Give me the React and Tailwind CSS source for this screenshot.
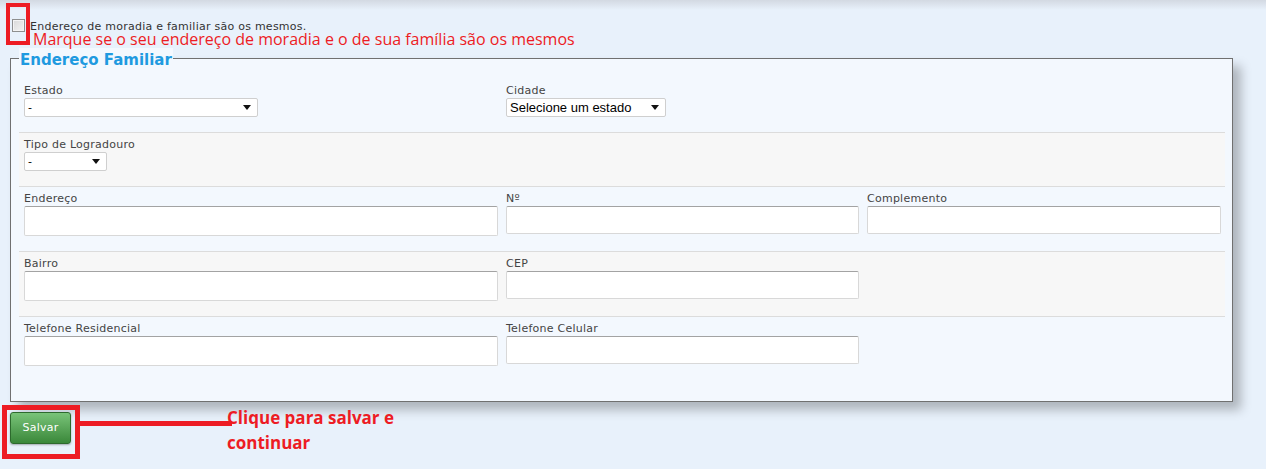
import React from 'react'

const label = "block text-[11px] leading-[13px] mb-[1px] tracking-[0.25px] text-[#444] font-['DejaVu_Sans',sans-serif]"
const input = "block w-full bg-white rounded-[2px] border border-[#d8d8d8] border-t-[#a3a3a3]"

const Arrow = () => (
  <svg width="8" height="5" viewBox="0 0 8 5" className="shrink-0">
    <path d="M0 0h8L4 5z" fill="#111" />
  </svg>
)

const Select = ({ width, text, arial }) => (
  <div className={`${width} h-[19px] bg-white border border-[#cfcfcf] rounded-[2px] flex items-center justify-between pl-[3px] pr-[6px]`}>
    <span className={arial ? "text-[13px] leading-[15px] text-black font-['Liberation_Sans',sans-serif]" : "text-[11px] leading-[13px] text-black font-['DejaVu_Sans',sans-serif]"}>{text}</span>
    <Arrow />
  </div>
)

const Field = ({ name, tall }) => (
  <div>
    <span className={label}>{name}</span>
    <div className={`${input} ${tall ? 'h-[30px]' : 'h-[28px]'}`} />
  </div>
)

const rowBase = "grid grid-cols-[474px_353px_354px] gap-x-[8px] pl-[5px] pt-[5px] pb-[15px]"

export default function App() {
  return (
    <div className="min-h-[469px] w-[1266px] bg-[#e8f1fb] font-['DejaVu_Sans',sans-serif] overflow-hidden">
      <div className="relative">
        <div className="h-[10px] bg-gradient-to-b from-[#d3d9e2] to-[#e8f1fb]" />

        <label className="flex items-center gap-[5px] pl-[12px] mt-[9px] h-[13px]">
          <span className="w-[13px] h-[13px] border border-[#8e8f8f] bg-gradient-to-br from-[#d9d9d9] to-[#f4f4f4] shadow-[inset_0_0_0_1px_#f4f4f4]" />
          <span className="text-[11px] leading-[11px] tracking-[0.25px] text-[#333] mt-[2px]">Endereço de moradia e familiar são os mesmos.</span>
        </label>
        <p className="pl-[33px] text-[16px] leading-[15px] text-[#ed1c24] font-['Open_Sans',sans-serif]">
          Marque se o seu endereço de moradia e o de sua família são os mesmos
        </p>

        {/* annotation box */}
        <div className="absolute left-[6px] top-[3px] w-[24px] h-[42px] border-[4px] border-[#ed1c24]" />
      </div>

      <fieldset className="ml-[10px] mt-[1px] w-[1223px] border border-[#707070] bg-[#f3f8fe] pl-[8px] pr-[7px] pb-[20px] shadow-[8px_8px_10px_rgba(0,0,0,0.25)]">
        <legend className="pt-[4px] px-[1px] text-[15px] leading-[16px] font-bold text-[#1f9ae0] bg-[#f3f8fe]">Endereço Familiar</legend>

        <div className={`${rowBase} pt-[16px] border-b border-[#dcdcdc]`}>
          <div>
            <span className={label}>Estado</span>
            <Select width="w-[234px]" text="-" />
          </div>
          <div>
            <span className={label}>Cidade</span>
            <Select width="w-[160px]" text="Selecione um estado" arial />
          </div>
        </div>

        <div className={`${rowBase} bg-[#f7f7f7] border-b border-[#dcdcdc]`}>
          <div>
            <span className={label}>Tipo de Logradouro</span>
            <Select width="w-[83px]" text="-" />
          </div>
        </div>

        <div className={`${rowBase} border-b border-[#dcdcdc]`}>
          <Field name="Endereço" tall />
          <Field name="Nº" />
          <Field name="Complemento" />
        </div>

        <div className={`${rowBase} bg-[#f7f7f7] border-b border-[#dcdcdc]`}>
          <Field name="Bairro" tall />
          <Field name="CEP" />
        </div>

        <div className={rowBase}>
          <Field name="Telefone Residencial" tall />
          <Field name="Telefone Celular" />
        </div>
      </fieldset>

      <div className="flex items-start pl-[2px] mt-[3px]">
        <div className="w-[78px] h-[54px] border-[5px] border-[#ed1c24] pl-[3px] pt-[2px] shrink-0">
          <button className="w-[61px] h-[32px] rounded-[3px] border border-[#2d6a2d] bg-gradient-to-b from-[#79c479] to-[#3a883a] text-white text-[11px] tracking-[0.25px] shadow-[0_1px_2px_rgba(0,0,0,0.3)]">
            Salvar
          </button>
        </div>
        <div className="mt-[16px] h-[5px] w-[152px] bg-[#ed1c24] shrink-0" />
        <p className="-ml-[5px] text-[17px] leading-[25px] font-bold text-[#ed1c24] font-['Open_Sans',sans-serif]">
          Clique para salvar e<br />continuar
        </p>
      </div>
    </div>
  )
}
